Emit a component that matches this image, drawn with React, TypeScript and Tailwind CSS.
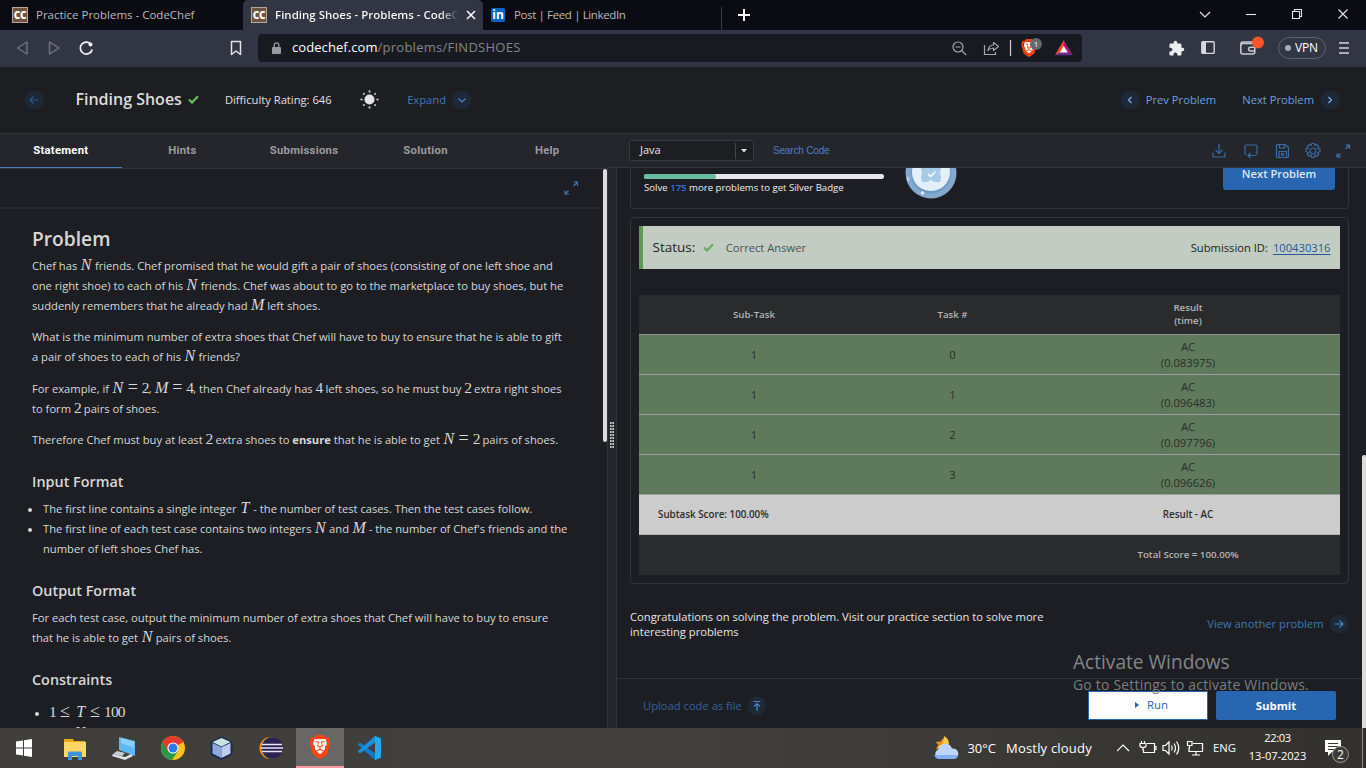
import type { ReactNode } from "react";
import { SiBrave } from "react-icons/si";
import { MdExtension } from "react-icons/md";

const MathI = ({ c }: { c: "N" | "M" | "T" }) => (
  <span
    className={
      "inline-block font-['Liberation_Serif',serif] text-[16px] leading-[0px] italic " +
      (c === "N" ? "w-[11.8px] pl-[0.6px]" : c === "M" ? "w-[13.8px] pl-[0.5px]" : "w-[11px] pl-[1.2px]")
    }
  >
    {c}
  </span>
);
const Num = ({ children }: { children: ReactNode }) => (
  <span className="inline-block font-['Liberation_Serif',serif] text-[15.5px] leading-[0px] tracking-[-0.8px]">{children}</span>
);
const Rel = ({ children }: { children: ReactNode }) => (
  <span className="inline-block w-[18px] text-center font-['Liberation_Serif',serif] text-[18px] leading-[0px]">{children}</span>
);
const Line = ({ children }: { children: ReactNode }) => <div className="h-5 leading-5 whitespace-nowrap">{children}</div>;

const CodeChefIcon = () => (
  <span className="flex h-4 w-4 shrink-0 items-center justify-center border border-[#b8a795] bg-[#70533f] font-['Open_Sans',sans-serif] text-[10px] leading-none font-extrabold tracking-[-0.3px] text-white">
    CC
  </span>
);

function TabStrip() {
  return (
    <div className="flex h-[30px] bg-[#0b0b14] text-[11.5px] text-[#b9b9bd]">
      <div className="flex w-[243px] items-center pl-3">
        <CodeChefIcon />
        <span className="ml-2 whitespace-nowrap">Practice Problems - CodeChef</span>
      </div>
      <div className="flex w-[240px] items-center rounded-tl-[5px] rounded-tr-[5px] bg-[#323543] pl-2">
        <CodeChefIcon />
        <span className="ml-2 w-[184px] overflow-hidden bg-linear-to-r from-white from-90% to-[#323543] bg-clip-text font-semibold whitespace-nowrap text-transparent">
          Finding Shoes - Problems - CodeC
        </span>
        <svg className="ml-[7px]" width="10" height="10" viewBox="0 0 10 10" stroke="#fff" strokeWidth="1.5">
          <path d="M1 1l8 8M9 1l-8 8" />
        </svg>
      </div>
      <div className="flex w-[239px] items-center pl-2">
        <span className="flex h-3.5 w-3.5 items-center justify-center rounded-[2px] bg-[#0a66c2] text-[12px] leading-none font-bold text-white">in</span>
        <span className="ml-[9px] tracking-[-0.37px]">Post | Feed | LinkedIn</span>
        <i className="mt-[7px] ml-auto h-[23px] w-px bg-[#3b3b45]" />
      </div>
      <svg className="mt-[9px] ml-4" width="12" height="12" viewBox="0 0 12 12" stroke="#fff" strokeWidth="2">
        <path d="M6 0v12M0 6h12" />
      </svg>
      <svg className="ml-auto" width="172" height="30" viewBox="0 0 172 30" fill="none" stroke="#e8e8ea" strokeWidth="1.1">
        <path d="M6 12l5 5 5-5" />
        <path d="M52 14.5h10" />
        <path d="M98.500 11.500h7v7h-7zM100.500 11.500v-2h7v7h-2" />
        <path d="M144.500 9.500l9 9M153.500 9.500l-9 9" />
      </svg>
    </div>
  );
}

function Toolbar() {
  return (
    <div className="flex h-[37px] items-start bg-[#323543]">
      <svg width="258" height="37" viewBox="0 0 258 37" fill="none" stroke="#72747f" strokeWidth="1.4" strokeLinejoin="round">
        <path d="M27 12v12l-9.500-6z" />
        <path d="M49.500 12v12l9.500-6z" />
        <path d="M91.500 15a6 6 0 1 0 .7 4.500" stroke="#f2f2f4" strokeWidth="1.7" />
        <circle cx="90.500" cy="14.500" r="2" fill="#f2f2f4" stroke="none" />
        <path d="M231.500 11.500h9v13l-4.500-3.500-4.500 3.500z" stroke="#e2e2e6" strokeWidth="1.5" />
      </svg>
      <div className="mt-1 flex h-7 w-[824px] items-center rounded bg-[#181a21] text-[13px]">
        <svg className="ml-3.5" width="9" height="12" viewBox="0 0 9 12">
          <rect y="5" width="9" height="7" rx="1" fill="#9a9ba1" />
          <path d="M2.200 5V3.200a2.300 2.300 0 0 1 4.600 0V5" fill="none" stroke="#9a9ba1" strokeWidth="1.3" />
        </svg>
        <span className="ml-[11px] tracking-[0.07px] text-white">codechef.com</span>
        <span className="tracking-[0.26px] text-[#85868b]">/problems/FINDSHOES</span>
        <svg className="ml-auto" width="140" height="28" viewBox="0 0 140 28" fill="none" stroke="#a6a7ad" strokeWidth="1.2">
          <circle cx="16" cy="13" r="5" />
          <path d="M13.500 13h5M19.800 16.800l4.400 4.200" />
          <path d="M42.500 11v9.500h11V18" />
          <path d="M46 16.500c.5-4 3-5.500 5.500-5.500V8.500l5 4-5 4V14c-2 0-4 .5-5.500 2.500z" strokeLinejoin="round" />
          <path d="M68.500 6v16" stroke="#d5d5d8" />
          <path d="M113 21.300L121.800 6 130.700 21.300z" fill="#662d91" stroke="none" />
          <path d="M121.800 6L113 21.300l8.800-5z" fill="#ff4724" stroke="none" />
          <path d="M121.800 6L130.700 21.300l-8.900-5z" fill="#9e1f63" stroke="none" />
          <path d="M121.800 12L117.800 18.500h8z" fill="#fff" stroke="none" />
        </svg>
        <div className="relative -ml-[62px] mr-10 flex h-5 w-[22px] items-center">
          <BraveLogo className="h-[18px] w-[18px]" />
          <span className="absolute top-0 left-[10px] flex h-3 w-3 items-center justify-center rounded-full bg-[#636773] text-[8px] leading-none text-white">1</span>
        </div>
      </div>
      <div className="flex h-9 flex-1 items-center">
        <MdExtension className="ml-[86px] h-[17px] w-[17px] text-[#eeeef0]" />
        <svg className="ml-4" width="14" height="14" viewBox="0 0 14 14">
          <rect x=".8" y=".8" width="12.400" height="11.600" rx="1" fill="none" stroke="#d9d9dd" strokeWidth="1.400" />
          <path d="M1 1h4v12H1z" fill="#d9d9dd" />
        </svg>
        <svg className="ml-6 overflow-visible" width="26" height="20" viewBox="0 0 26 20" fill="none" stroke="#c9cad0" strokeWidth="1.500">
          <rect x="1.800" y="5.500" width="14" height="10.500" rx="2" />
          <path d="M2 7.500V5.500q0-1.500 2-1.500h10M16 9.200h-4.500a1.800 1.800 0 0 0 0 3.800H16" />
          <circle cx="19" cy="4.500" r="6" fill="#fb542b" stroke="none" />
        </svg>
        <div className="ml-[13px] flex h-[22px] w-12 items-center rounded-full border border-[#5f6270] pl-[6px] text-[12px] tracking-[-0.14px] text-white">
          <i className="mr-1 h-1.5 w-1.5 rounded-full bg-[#a9abba]" />
          VPN
        </div>
        <svg className="ml-[13px]" width="10" height="12" viewBox="0 0 10 12" stroke="#d5d5da" strokeWidth="1.500">
          <path d="M0 1h10M0 6h10M0 11h10" />
        </svg>
      </div>
    </div>
  );
}

const BraveLogo = ({ className }: { className: string }) => (
  <span className={"relative inline-block " + className}>
    <svg viewBox="0 0 24 24" className="absolute inset-0 h-full w-full">
      <path d="M6 4h12l1 6-3 8-4 4-4-4-3-8z" fill="#fff" />
    </svg>
    <SiBrave className="absolute inset-0 h-full w-full text-[#fb4310]" />
  </span>
);

const Circle = ({ d, color = "#4a83c6", className = "" }: { d: string; color?: string; className?: string }) => (
  <svg className={"shrink-0 " + className} width="20" height="20" viewBox="0 0 20 20">
    <circle cx="10" cy="10" r="9.500" fill="#1e2837" />
    <path d={d} fill="none" stroke={color} strokeWidth="1.200" />
  </svg>
);

function PageHeader() {
  return (
    <div className="flex h-[67px] items-center border-b border-[#35363c] bg-[#1d1e22] text-[11.2px] text-[#e0e0e2]">
      <Circle className="-mt-px ml-[23.5px]" color="#24599c" d="M14.500 10H6M9.500 6.500L6 10l3.500 3.500" />
      <span className="-mt-[2px] ml-[31.9px] text-[16px] font-semibold whitespace-nowrap text-[#dcdcdc]">Finding Shoes</span>
      <svg className="-mt-px ml-[6px]" width="11" height="9" viewBox="0 0 11 9" fill="none" stroke="#6ebd64" strokeWidth="2.200">
        <path d="M1 4.500l3 3L10 1.200" />
      </svg>
      <span className="ml-[26px] whitespace-nowrap">Difficulty Rating: 646</span>
      <svg className="-mt-[2px] ml-7" width="19" height="19" viewBox="0 0 19 19" stroke="#e3e3e3" strokeWidth="1.700">
        <circle cx="9.500" cy="9.500" r="5" fill="#e3e3e3" stroke="none" />
        <path d="M9.500 .5v2M9.500 16.500v2M.5 9.500h2M16.500 9.500h2M3.300 3.300l1.200 1.200M14.500 14.500l1.200 1.200M3.300 15.700l1.200-1.200M14.500 4.500l1.200-1.200" />
      </svg>
      <span className="ml-[28.5px] text-[#4378b5]">Expand</span>
      <Circle className="-mt-px ml-[6.5px]" d="M6.500 8.500L10 12l3.500-3.500" />
      <Circle className="-mt-px ml-auto" color="#7fb2f0" d="M11.500 7L8.500 10l3 3" />
      <span className="ml-1.5 text-[#6ba0dd]">Prev Problem</span>
      <span className="ml-[26px] text-[#6ba0dd]">Next Problem</span>
      <Circle className="-mt-px mr-[26px] ml-1.5" color="#7fb2f0" d="M8.500 7l3 3-3 3" />
    </div>
  );
}

const ExpandIcon = ({ className = "" }: { className?: string }) => (
  <svg className={className} width="14" height="14" viewBox="0 0 14 14" stroke="#4177b6" strokeWidth="1.200" fill="none">
    <path d="M9.500 1h4v4M13.500 1L9.500 5M1 9.500v3.500h4M1 13l3.500-3.500" />
  </svg>
);

const Bullet = ({ children, wide }: { children: ReactNode; wide?: boolean }) => (
  <li className={"relative " + (wide ? "pl-[17px]" : "pl-[11px]")}>
    <i className={"absolute top-[9px] h-1 w-1 rounded-full bg-[#d8d8d8] " + (wide ? "left-[3px]" : "-left-1")} />
    {children}
  </li>
);

function Statement() {
  const tabs = ["Statement", "Hints", "Submissions", "Solution", "Help"];
  return (
    <section className="flex w-[608px] flex-col border-r border-[#303341]">
      <nav className="-mr-px flex h-[35px] shrink-0 border-b border-[#303341] bg-[#25262b] font-[Roboto,sans-serif] text-[11.3px] font-bold tracking-[0.28px] text-[#9b9b9f]">
        {tabs.map((t, i) => (
          <div key={t} className={"flex flex-1 items-center justify-center border-b pt-px " + (i === 0 ? "border-[#4b79c2] text-white" : "border-transparent")}>
            {t}
          </div>
        ))}
      </nav>
      <div className="flex min-h-0 flex-1">
        <div className="min-w-0 flex-1 overflow-hidden">
          <div className="flex h-10 items-center justify-end border-b-2 border-[#27282c]">
            <ExpandIcon className="mr-[25px]" />
          </div>
          <div className="pt-[17px] pl-8 text-[11.2px] text-[#d8d8d8]">
            <h2 className="mb-1 h-[26px] text-[19.2px] leading-[26px] font-semibold">Problem</h2>
            <Line>Chef has <MathI c="N" /> friends. Chef promised that he would gift a pair of shoes (consisting of one left shoe and</Line>
            <Line>one right shoe) to each of his <MathI c="N" /> friends. Chef was about to go to the marketplace to buy shoes, but he</Line>
            <Line>suddenly remembers that he already had <MathI c="M" /> left shoes.</Line>
            <div className="pt-[11px]">
              <Line>What is the minimum number of extra shoes that Chef will have to buy to ensure that he is able to gift</Line>
              <Line>a pair of shoes to each of his <MathI c="N" /> friends?</Line>
            </div>
            <div className="pt-3">
              <Line>
                For example, if <MathI c="N" /><Rel>=</Rel><Num>2</Num>, <MathI c="M" /><Rel>=</Rel><Num>4</Num>, then Chef already has <Num>4</Num> left shoes, so he must buy <Num>2</Num> extra right shoes
              </Line>
              <Line>to form <Num>2</Num> pairs of shoes.</Line>
            </div>
            <div className="pt-[11px]">
              <Line>
                Therefore Chef must buy at least <Num>2</Num> extra shoes to <b>ensure</b> that he is able to get <MathI c="N" /><Rel>=</Rel><Num>2</Num> pairs of shoes.
              </Line>
            </div>
            <h3 className="mt-[22px] mb-[7px] h-5 text-[14.4px] leading-5 font-semibold">Input Format</h3>
            <ul>
              <Bullet><Line>The first line contains a single integer <MathI c="T" /> - the number of test cases. Then the test cases follow.</Line></Bullet>
              <Bullet>
                <Line>The first line of each test case contains two integers <MathI c="N" /> and <MathI c="M" /> - the number of Chef's friends and the</Line>
                <Line>number of left shoes Chef has.</Line>
              </Bullet>
            </ul>
            <h3 className="mt-[22px] mb-[7px] h-5 text-[14.4px] leading-5 font-semibold">Output Format</h3>
            <Line>For each test case, output the minimum number of extra shoes that Chef will have to buy to ensure</Line>
            <Line>that he is able to get <MathI c="N" /> pairs of shoes.</Line>
            <h3 className="mt-[22px] mb-[13px] h-5 text-[14.4px] leading-5 font-semibold">Constraints</h3>
            <ul>
              <Bullet wide><Line><Num>1</Num><Rel>≤</Rel><span className="pl-px" /><MathI c="T" /><Rel>≤</Rel><Num>100</Num></Line></Bullet>
              <Bullet wide><div className="pt-px"><Line><Num>1</Num><Rel>≤</Rel><MathI c="N" /><Rel>≤</Rel><Num>100</Num></Line></div></Bullet>
            </ul>
          </div>
        </div>
        <div className="w-1">
          <div className="h-[273px] w-1 rounded-full bg-[#dcdcdc]" />
        </div>
      </div>
    </section>
  );
}

const rows = ["0.083975", "0.096483", "0.097796", "0.096626"];

function ResultTable() {
  return (
    <div className="mt-[26px] text-center">
      <div className="grid h-10 grid-cols-[230px_167px_1fr] items-center border-b border-[#8d8f8d] bg-[#2a2b2d] pb-px text-[9.7px] leading-[13px] font-semibold text-[#b5b5b5]">
        <span>Sub-Task</span>
        <span>Task #</span>
        <span>Result<br />(time)</span>
      </div>
      {rows.map((t, i) => (
        <div key={t} className="grid h-10 grid-cols-[230px_167px_1fr] items-center border-b border-[#9a9f99] bg-[#5f795c] text-[11.2px] leading-4 text-[#26302a]">
          <span>1</span>
          <span>{i}</span>
          <span>AC<br />({t})</span>
        </div>
      ))}
      <div className="grid h-10 grid-cols-[397px_1fr] items-center border-b border-[#b2b2b2] bg-[#ccc] pt-[2px] text-[9.8px] font-semibold text-[#2b2b2b]">
        <span className="pl-[19px] text-left">Subtask Score: 100.00%</span>
        <span>Result - AC</span>
      </div>
      <div className="grid h-10 grid-cols-[397px_1fr] items-center bg-[#2a2b2d] text-[9.7px] font-semibold text-[#b5b5b5]">
        <span />
        <span>Total Score = 100.00%</span>
      </div>
    </div>
  );
}

function EditorBar() {
  return (
    <div className="-ml-2 flex h-[34px] shrink-0 items-center border-b border-[#303341] bg-[#25262b] pl-5">
      <div className="ml-px flex h-[21px] w-[125px] items-center rounded-[2px] border border-[#38393f] bg-[#1d1e22] pl-2.5 text-[11px] text-[#e6e6e6]">
        Java
        <span className="ml-auto flex h-4 w-[18px] items-center justify-center border-l border-[#45464b]">
          <svg className="mr-px" width="6" height="4" viewBox="0 0 6 4" fill="#ddd"><path d="M0 0h6L3 3.500z" /></svg>
        </span>
      </div>
      <span className="ml-[19px] text-[10px] tracking-[-0.18px] text-[#4b80c0] font-['Liberation_Sans',sans-serif]">Search Code</span>
      <svg className="ml-auto" width="112" height="18" viewBox="0 0 112 18" fill="none" stroke="#386aa6" strokeWidth="1.200">
        <path d="M1 10.500v3.500q0 1 1 1h10q1 0 1-1v-3.500M7 2v9.500M3.500 8L7 11.500 10.500 8" />
        <path d="M34.500 12.500q-1.500 0-1.500-1.500V4.500Q33 3 34.500 3h9Q45 3 45 4.500V11q0 1.500-1.500 1.500M43.500 13.500H36M38.500 11L36 13.500l2.500 2.500" />
        <path d="M64.500 3.500q0-1 1-1H73l3.500 3v9q0 1-1 1h-10q-1 0-1-1zM67.500 2.500v3.500h5v-3.500M67 15.500v-6h7.500v6" />
        <circle cx="70.500" cy="12.500" r="1.200" />
        <circle cx="101" cy="9" r="3" />
        <path d="M99.700 1.500h2.600l.6 2 1.800-.9 1.900 1.900-.9 1.700 2.300.8v2.700l-2.200.8.9 1.800-1.900 1.900-1.800-.9-.7 2.200h-2.600l-.7-2.200-1.800.9-1.900-1.900.9-1.800-2.200-.8V7l2.200-.8-.9-1.700 1.900-1.900 1.800.9z" />
      </svg>
      <ExpandIcon className="mr-4 ml-[12.5px]" />
    </div>
  );
}

function Editor() {
  return (
    <section className="flex min-w-0 flex-1 flex-col">
      <EditorBar />
      <div className="flex min-h-0 flex-1">
        <div className="flex min-w-0 flex-1 flex-col border-l border-[#303341]">
          <div className="flex h-[510px] shrink-0 flex-col overflow-hidden pr-3 pl-[13px]">
            <div className="-mt-3 flex h-[53px] shrink-0 rounded-[4px] border border-[#33353b] pl-[13px]">
              <div className="w-[240px] pt-[17px]">
                <div className="h-[5px] rounded-full bg-[#e6e6ea]">
                  <div className="h-[5px] w-[72px] rounded-full bg-[#69bd9f]" />
                </div>
                <p className="mt-[3px] text-[9.6px] leading-3 whitespace-nowrap text-[#eee]">
                  Solve <b className="font-semibold text-[#2c74e8]">175</b> more problems to get Silver Badge
                </p>
              </div>
              <svg className="-mt-[10px] ml-[20.5px]" width="52" height="52" viewBox="0 0 52 52">
                <circle cx="26" cy="26" r="25.500" fill="#85a9ce" />
                <circle cx="26" cy="26.500" r="20" fill="#6f9cc6" />
                <circle cx="26" cy="25" r="19" fill="#e3f0f9" />
                <path d="M17 18h5l4 2 4-2h5l1 4-1 4 1 4-1 5h-5l-4-2-4 2h-5l-1-5 1-4-1-4z" fill="#a6cbe6" />
                <path d="M23 27l2.500 2.500 5-5" stroke="#fff" strokeWidth="1.300" fill="none" />
                <path d="M3 30v4" stroke="#cfe2f3" strokeWidth="1.500" />
                <path d="M17.500 44v4M15.500 46h4" stroke="#fff" strokeWidth="1" />
              </svg>
              <button className="mr-[13px] ml-auto h-[33px] w-28 rounded-[3px] bg-[#2866b1] text-[11.2px] leading-[34px] font-semibold text-[#dfe6ef]">Next Problem</button>
            </div>
            <div className="mt-2 shrink-0 rounded-[4px] border border-[#33353b] p-2">
              <div className="flex h-[43px] items-center border-l-4 border-[#5c9a52] bg-[#c2ccc2] pr-[9.5px] pl-[9.5px] text-[11.2px] text-[#1e2420]">
                <span className="text-[13.5px]">Status:</span>
                <svg className="ml-[8px]" width="11" height="9" viewBox="0 0 11 9" fill="none" stroke="#67ad60" strokeWidth="2.200">
                  <path d="M1 4.500l3 3L10 1.200" />
                </svg>
                <span className="mt-px ml-[11.5px] text-[#4d534e]">Correct Answer</span>
                <span className="mt-px ml-auto">Submission ID:</span>
                <span className="mt-px ml-[5px] text-[#24589b] underline underline-offset-2">100430316</span>
              </div>
              <ResultTable />
            </div>
            <div className="flex pt-[25px] text-[11.2px] text-[#e6e6e6]">
              <p className="leading-[15px]">
                Congratulations on solving the problem. Visit our practice section to solve more
                <br />
                interesting problems
              </p>
              <span className="mt-[5px] ml-auto h-5 leading-5 text-[#4077b8]">View another problem</span>
              <Circle className="mt-[5px] ml-[5.5px]" d="M5.500 10H14M10.500 6.500L14 10l-3.500 3.500" />
            </div>
          </div>
          <div className="relative flex flex-1 items-center border-t border-[#303341] pb-px pl-[26px] text-[11.2px] text-[#34629b]">
            <span className="mt-1.5">Upload code as file</span>
            <Circle className="mt-[5px] ml-[5px]" color="#4a83c6" d="M6.500 5.500h7M10 15V7.500M7 10.500l3-3 3 3" />
            <button className="mt-1 ml-auto flex h-[29px] w-[120px] items-center justify-center gap-2 border border-[#2866b1] bg-white pl-[7px] text-[11.4px] text-[#2a62a8]">
              <svg width="4" height="6" viewBox="0 0 4 6" fill="#2a62a8"><path d="M0 0l4 3-4 3z" /></svg>
              Run
            </button>
            <button className="mt-[5px] mr-[25px] ml-2 h-[29px] w-[120px] rounded-[2px] bg-[#2866b1] text-[11.4px] font-bold text-white">Submit</button>
            <div className="pointer-events-none absolute -top-[30px] left-[456px] whitespace-nowrap text-[#858689]">
              <p className="text-[19.1px] leading-[27px]">Activate Windows</p>
              <p className="-mt-px text-[13.9px] leading-5 tracking-[0.24px] text-[#7b7c80]">Go to Settings to activate Windows.</p>
            </div>
          </div>
        </div>
        <div className="w-[5px] pt-[287px] pl-px">
          <div className="h-[273px] w-1 rounded-t-full bg-[#dcdcdc]" />
        </div>
      </div>
    </section>
  );
}

function Taskbar() {
  return (
    <div className="flex h-10 bg-linear-to-r from-[#403e3b] via-[#42403c] to-[#33312e] text-white">
      <svg width="296" height="40" viewBox="0 0 296 40">
        <path d="M16 13.500l7-1v7h-7zM24 12.300l8-1.300v8.500h-8zM16 20.500h7v7l-7-1zM24 20.500h8V29l-8-1.300z" fill="#fff" />
        <path d="M64 11h9l1 2h11v16H64z" fill="#e8a914" />
        <path d="M64 14h22v15H64z" fill="#ffd563" />
        <path d="M68 25q0-1.500 1-1.500h12q1 0 1 1.500v7h-4v-4h-6v4h-4z" fill="#3a97dd" />
        <path d="M119 9l16 4v15l-16-6z" fill="#5db9f5" />
        <path d="M121 10l13 3.500v6L121 15z" fill="#8bd0fb" />
        <path d="M117 23l8 2-3 3-9-2z" fill="#c9ced3" />
        <path d="M113 26l12 3 6-3 2 2-8 4-13-4z" fill="#dfe2e5" />
        <circle cx="173" cy="20" r="12" fill="#fbc116" />
        <path d="M173 20L162.600 14A12 12 0 0 1 183.400 14z" fill="#e33b2e" />
        <path d="M162.600 14A12 12 0 0 0 172 32l6-9z" fill="#279847" />
        <path d="M162.600 14l5 9 5.400-9z" fill="#e33b2e" />
        <circle cx="173" cy="20" r="5.600" fill="#fff" />
        <circle cx="173" cy="20" r="4.500" fill="#2f77ea" />
        <path d="M221.500 8.500l11 5v13l-11 5.500-11-5.500v-13z" fill="#1b2b52" />
        <path d="M221.500 10l9 4-9 4.500-9-4.500z" fill="#c9e5e0" />
        <path d="M212.500 15l9 4.300V30l-9-4.500z" fill="#8fa9de" />
        <path d="M230.500 15l-9 4.300V30l9-4.500z" fill="#bccdf0" />
        <circle cx="270.500" cy="20" r="11" fill="#f79421" />
        <circle cx="272.500" cy="20" r="10.800" fill="#2c2255" stroke="#413f3c" strokeWidth=".8" />
        <path d="M262 16.500h20M261 20h22M262 23.500h20" stroke="#e9e7f2" strokeWidth="1.700" />
      </svg>
      <div className="flex w-12 items-center justify-center border-b-2 border-[#f99aa2] bg-[#686765]">
        <BraveLogo className="h-[24px] w-[24px]" />
      </div>
      <svg width="48" height="40" viewBox="0 0 48 40">
        <path d="M31 8l6 2.500v19L31 32 13.500 16.500l2.500-2L31 25.500z" fill="#0d7ccb" />
        <path d="M31 8L13.500 23.500l2.500 2L31 14.500z" fill="#1692dd" />
        <path d="M31 8l6 2.500v19L31 32z" fill="#28a7f0" />
      </svg>
      <svg className="ml-auto" width="26" height="40" viewBox="0 0 26 40">
        <path d="M9 10l-2.500 3.500L1.500 14l3 3-2.500 4 6 1 5-7z" fill="#f28c1e" />
        <path d="M10 8q5 2.500 5 8l-5 5q-5 0-6.500-2.500Q10 17 10 8z" fill="#ffc83d" />
        <path d="M5 31a5 5 0 0 1-.5-9.500A7 7 0 0 1 18 20.500 5.300 5.300 0 0 1 20 31z" fill="#bdd4fb" />
        <path d="M.500 27h23.500q-1 4-5 4H5q-3.500 0-4.500-4z" fill="#86b0f4" />
      </svg>
      <span className="ml-[7px] text-[13px] leading-10">30°C</span>
      <span className="ml-2.5 w-[87px] text-[13px] leading-10 tracking-[0.2px] whitespace-nowrap">Mostly cloudy</span>
      <svg className="ml-6" width="88" height="40" viewBox="0 0 88 40" fill="none" stroke="#fff" strokeWidth="1.200">
        <path d="M0 23l6-6 6 6" />
        <path d="M30 15.500h7.500v9H26.500v-3M37.500 18.500H39v3h-1.500" />
        <path d="M24.500 13v2.500M27.500 13v2.500M23 15.500h6v2q0 2-3 2t-3-2zM26 19.500v3" />
        <path d="M46 17.500h2.500l3.500-3.500v12l-3.500-3.500H46z" />
        <path d="M54.500 17.500q1.500 2.500 0 5M57 15.500q3 4.500 0 9M59.500 13.500q4.500 6.500 0 13" />
        <path d="M76 15.500h9.500v8H72v-4M79 23.500V27M75 27h8M70.500 13.500h4.500v4h-4.500zM72.500 17.500v3" />
      </svg>
      <span className="ml-2 w-[24px] text-[11.3px] leading-10">ENG</span>
      <div className="ml-[10px] flex w-[61px] flex-col items-center pt-[1px] text-[11.2px] leading-[18px] tracking-[-0.1px]">
        <span className="tracking-[-0.4px]">22:03</span>
        <span>13-07-2023</span>
      </div>
      <div className="relative mr-[9px] ml-[16px] w-[29px]">
        <svg width="29" height="40" viewBox="0 0 29 40">
          <path d="M1 12h16v12H8l-4 4v-4H1z" fill="#fff" />
          <path d="M4 15.500h10M4 18.500h10M4 21.500h6" stroke="#3a3835" />
        </svg>
        <span className="absolute top-[18px] left-2 flex h-[17px] w-[17px] items-center justify-center rounded-full border border-[#9b9a98] bg-[#3c3a37] text-[12px] leading-none">2</span>
      </div>
      <div className="w-[4px] border-l border-[#8a8988]" />
    </div>
  );
}

export default function App() {
  return (
    <div className="flex h-[768px] w-[1366px] flex-col overflow-hidden bg-[#1d1e23] font-['Open_Sans',sans-serif]">
      <TabStrip />
      <Toolbar />
      <PageHeader />
      <main className="flex min-h-0 flex-1">
        <Statement />
        <div className="flex w-2 flex-col items-center bg-[#25262b] pt-[288px]">
          {Array.from({ length: 9 }, (_, i) => (
            <i key={i} className="mb-px h-[2px] w-1 shrink-0 border-x border-[#c8c8c8] bg-[#8c8c90]" />
          ))}
        </div>
        <Editor />
      </main>
      <Taskbar />
    </div>
  );
}
